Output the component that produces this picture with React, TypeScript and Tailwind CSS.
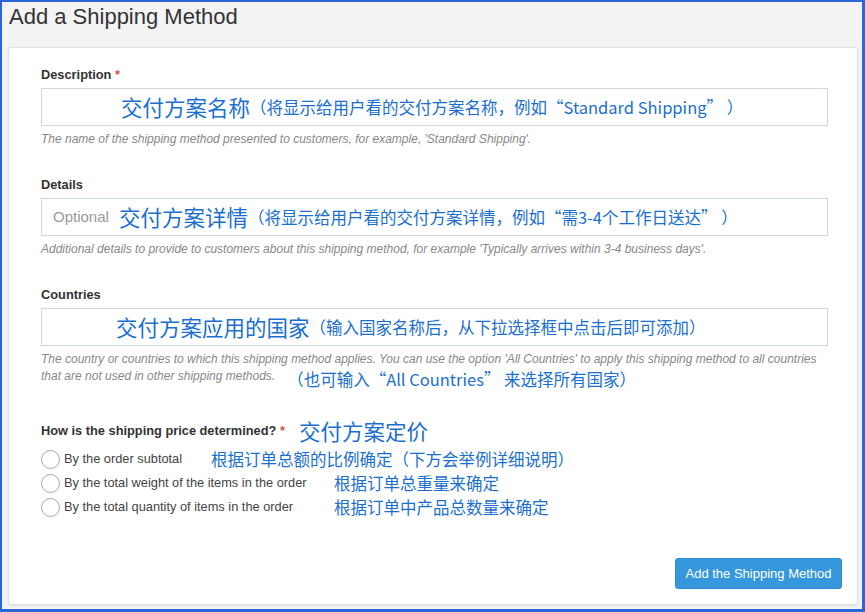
import React from "react";

const cn = "text-[#1a6fd1] [font-family:'Noto_Sans_CJK_SC','Noto_Sans',sans-serif]";
const sans = "[font-family:'Liberation_Sans',Arial,sans-serif]";

function Radio({ label, note, noteX }: { label: string; note: string; noteX: number }) {
  return (
    <div className="flex items-center h-[24px]">
      <span className="w-[19px] h-[19px] rounded-full border-[1.5px] border-[#a8a8a8] bg-white shrink-0" />
      <span className={`ml-[4px] text-[12.8px] text-[#444] ${sans}`}>{label}</span>
      <span className={`absolute text-[16.5px] leading-none ${cn}`} style={{ left: noteX }}>{note}</span>
    </div>
  );
}

export default function App() {
  return (
    <div className={`w-[865px] h-[612px] border-l-2 border-t-2 border-r-[3px] border-b-[3px] border-[#2a66d9] bg-[#f3f3f3] flex flex-col ${sans}`}>
      <div className="h-[45px] pl-[7px] pt-[2px]">
        <h1 className="text-[22px] leading-[26px] text-[#333]">Add a Shipping Method</h1>
      </div>
      <div className="relative ml-[6px] mr-[4px] h-[558px] bg-white border border-[#e2e2e2] rounded-[3px] shadow-[0_1px_2px_rgba(0,0,0,0.08)] pl-[32px] pr-[29px] pt-[18px]">
        {/* Description */}
        <div className="text-[12.8px] font-bold text-[#333] leading-[17px]">
          Description <span className="text-[#d9534f]">*</span>
        </div>
        <div className="mt-[5px] h-[38px] border border-[#cfd8e3] flex items-center pl-[79px]">
          <span className={`text-[21.5px] leading-none ${cn}`}>交付方案名称</span>
          <span className={`text-[16.5px] leading-none ${cn}`}>（将显示给用户看的交付方案名称，例如“Standard Shipping” ）</span>
        </div>
        <p className="mt-[5px] text-[12px] italic text-[#888] leading-[17px]">
          The name of the shipping method presented to customers, for example, 'Standard Shipping'.
        </p>

        {/* Details */}
        <div className="mt-[28px] text-[12.8px] font-bold text-[#333] leading-[17px]">Details</div>
        <div className="mt-[5px] h-[38px] border border-[#cfd8e3] flex items-center pl-[11px]">
          <span className="text-[15px] text-[#999] mr-[10px]">Optional</span>
          <span className={`text-[21.5px] leading-none ${cn}`}>交付方案详情</span>
          <span className={`text-[16.5px] leading-none ${cn}`}>（将显示给用户看的交付方案详情，例如“需3-4个工作日送达” ）</span>
        </div>
        <p className="mt-[5px] text-[12px] italic text-[#888] leading-[17px]">
          Additional details to provide to customers about this shipping method, for example 'Typically arrives within 3-4 business days'.
        </p>

        {/* Countries */}
        <div className="mt-[28px] text-[12.8px] font-bold text-[#333] leading-[17px]">Countries</div>
        <div className="mt-[5px] h-[38px] border border-[#cfd8e3] flex items-center pl-[74px]">
          <span className={`text-[21.5px] leading-none ${cn}`}>交付方案应用的国家</span>
          <span className={`text-[16.5px] leading-none ${cn}`}>（输入国家名称后，从下拉选择框中点击后即可添加）</span>
        </div>
        <div className="mt-[5px] text-[12px] italic text-[#888] leading-[17px]">
          <div>The country or countries to which this shipping method applies. You can use the option 'All Countries' to apply this shipping method to all countries</div>
          <div className="flex items-start">
            <span>that are not used in other shipping methods.</span>
            <span className={`not-italic ml-[12px] mt-[0px] text-[16.5px] leading-[22px] ${cn}`}>（也可输入“All Countries” 来选择所有国家）</span>
          </div>
        </div>

        {/* Pricing */}
        <div className="mt-[30px] flex items-center h-[22px]">
          <span className="text-[12.8px] font-bold text-[#333]">
            How is the shipping price determined? <span className="text-[#d9534f]">*</span>
          </span>
          <span className={`ml-[14px] text-[21.5px] leading-none ${cn}`}>交付方案定价</span>
        </div>
        <div className="mt-[5px] flex flex-col">
          <Radio label="By the order subtotal" note="根据订单总额的比例确定（下方会举例详细说明）" noteX={202} />
          <Radio label="By the total weight of the items in the order" note="根据订单总重量来确定" noteX={325} />
          <Radio label="By the total quantity of items in the order" note="根据订单中产品总数量来确定" noteX={325} />
        </div>

        <div className="absolute right-[15px] bottom-[15px]">
          <button className="h-[31px] w-[167px] rounded-[3px] bg-[#3598dc] text-white text-[13px] border border-[#2e8bcc]">
            Add the Shipping Method
          </button>
        </div>
      </div>
    </div>
  );
}
